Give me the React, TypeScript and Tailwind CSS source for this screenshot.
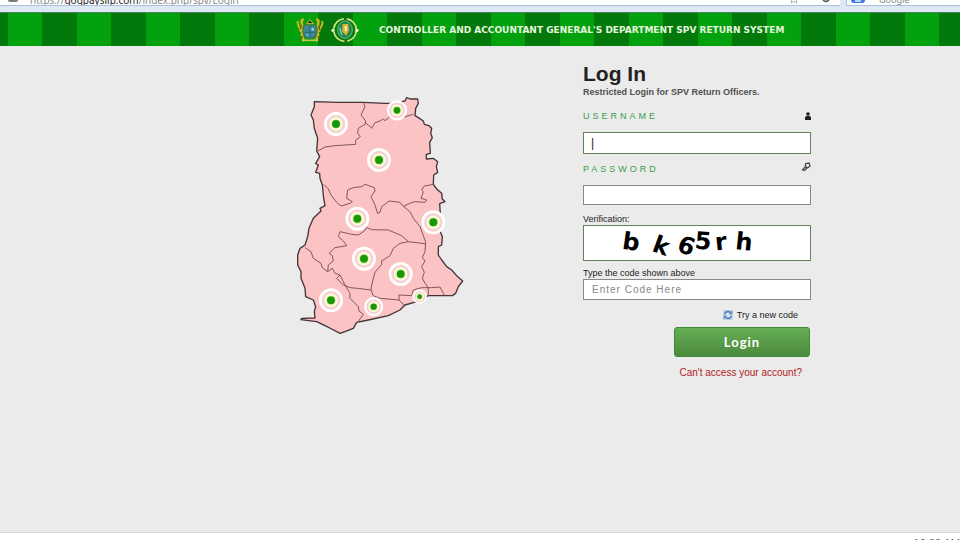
import React from "react";

const OUTLINE =
  "M88 50L160 52L235 52L300 55L325 55L360 48L365 38L375 42L398 42L400 55L392 70L390 92L400 98L415 108L418 118L432 122L440 130L437 145L442 158L434 172L436 205L424 208L424 222L445 220L458 230L454 245L458 262L446 270L445 298L455 312L470 325L472 342L480 350L464 356L466 385L466 440L472 455L470 480L460 485L460 510L470 525L485 545L500 555L515 572L533 588L520 605L512 625L502 632L430 632L395 650L360 660L345 675L310 692L250 705L215 712L205 730L180 740L165 745L140 732L120 722L95 710L48 704L50 700L90 699L88 680L92 665L85 645L62 635L60 610L48 580L48 560L38 540L38 510L45 490L60 480L68 455L72 430L85 400L108 378L105 370L120 362L116 340L112 300L105 280L104 265L92 262L100 240L92 235L104 215L95 198L98 160L88 130L85 105L78 90L88 65Z";

const BORDERS = [
  "M235 52L240 65L228 90L242 108L240 118L220 130L218 145L226 155L212 165L212 178L150 182L120 186L95 200",
  "M242 115L250 120L260 130L270 113L285 108L295 102L300 107L318 92L350 98L385 88",
  "M116 298L130 312L138 330L155 352L168 363L195 355L202 350L185 340L188 315L205 308L230 305L240 298L268 308L270 318L258 335L270 360L278 385L285 382L290 365L312 348L345 352L355 364L375 355L388 350L420 352L425 345L408 340L415 320L410 315L418 303L445 298",
  "M355 364L375 380L385 400L405 425L415 452L422 472L420 500L412 518L420 528L410 545L418 562L412 580L420 595L430 608L430 632",
  "M60 488L78 500L85 520L108 535L112 548L128 560L142 550L150 565L165 570L155 580L175 600L195 608L218 610L258 615L265 632L285 640L342 645L342 630L380 632L385 615L410 608L440 608L465 606L475 625L480 632",
  "M128 560L130 540L145 528L142 512L132 505L150 488L185 482L175 468L160 455L165 440L200 448L220 450L238 438L245 428L260 434L310 435L350 452L370 470L420 476",
  "M370 470L345 475L325 490L315 512L290 528L290 538L270 562L260 600L258 615",
  "M165 570L180 600L195 625L195 640L220 665L222 678L235 688L218 712",
  "M342 645L355 658L355 665",
];

const REGIONS = [
  { x: 153, y: 117, s: 1 },
  { x: 336, y: 76, s: 0.85 },
  { x: 282, y: 225, s: 1 },
  { x: 217, y: 401, s: 1 },
  { x: 445, y: 412, s: 1 },
  { x: 237, y: 521, s: 1 },
  { x: 347, y: 567, s: 1 },
  { x: 138, y: 646, s: 1 },
  { x: 266, y: 665, s: 0.8 },
  { x: 404, y: 635, s: 0.6 },
];

function RegionMap() {
  return (
    <svg viewBox="0 0 570 765" className="mt-[39px] h-[255px] w-[190px] shrink-0" role="img" aria-label="Map of Ghana">
      <path d={OUTLINE} fill="#fbc3c3" stroke="#453539" strokeWidth="4" strokeLinejoin="round" />
      <g fill="none" stroke="#80595d" strokeWidth="3" strokeLinejoin="round">
        {BORDERS.map((d) => (
          <path key={d} d={d} />
        ))}
      </g>
      {REGIONS.map((r) => (
        <g key={`${r.x}-${r.y}`} transform={`translate(${r.x} ${r.y}) scale(${r.s})`}>
          <circle r="32" fill="#fbd3d3" stroke="#fff" strokeWidth="8" />
          <circle r="22" fill="#fffdf0" stroke="#f3ccce" strokeWidth="3" />
          <circle r="17" fill="#e8f8b4" />
          <circle r="12" fill="#1b960c" />
        </g>
      ))}
    </svg>
  );
}

function CoatOfArms() {
  return (
    <svg viewBox="0 0 84 78" className="h-[26px] w-[28px]" aria-hidden="true">
      <g fill="none" stroke="#c9b822" strokeWidth="8" strokeLinecap="round">
        <path d="M20 8C10 14 24 22 16 30C10 38 22 40 18 52C16 62 24 64 22 70" />
        <path d="M64 8C74 14 60 22 68 30C74 38 62 40 66 52C68 62 60 64 62 70" />
        <path d="M5 14C2 24 12 30 14 42M79 14C82 24 72 30 70 42" strokeWidth="6" />
      </g>
      <path d="M20 70H66" stroke="#d0c54c" strokeWidth="5" />
      <path d="M24 26L34 22L42 28L52 22L60 28L64 46L56 60L42 66L28 60L20 46Z" fill="#3c8798" stroke="#4f6a3c" strokeWidth="3" />
      <path d="M42 28V64M25 46H60" stroke="#2c6c70" strokeWidth="3" />
      <path d="M32 20L42 8L52 20Z" fill="#242e1a" stroke="#d4bd34" strokeWidth="3" />
      <circle cx="50" cy="37" r="4" fill="#8ee0ed" />
      <circle cx="34" cy="54" r="4" fill="#4fb8d2" />
      <path d="M17 24L12 36M68 26L72 40M20 58L14 64M66 58L70 64" stroke="#6a4d10" strokeWidth="4" />
    </svg>
  );
}

function DepartmentSeal() {
  return (
    <svg viewBox="0 0 84 78" className="h-[26px] w-[28px]" aria-hidden="true">
      <circle cx="42" cy="39" r="34" fill="#087d10" stroke="#d5df83" strokeWidth="5" strokeDasharray="46 9" />
      <ellipse cx="42" cy="38" rx="22" ry="26" fill="#168b52" stroke="#79b478" strokeWidth="3" />
      <path d="M34 22L52 20L54 40L46 56L34 44Z" fill="#e1ae35" />
      <path d="M40 28L48 26V40L42 44Z" fill="#f8eba0" />
      <path d="M26 32C32 40 26 46 34 54" fill="none" stroke="#8fd4ba" strokeWidth="4" />
      <circle cx="6" cy="40" r="5" fill="#eff2c0" />
      <circle cx="78" cy="40" r="5" fill="#eff2c0" />
    </svg>
  );
}

function BrowserBar() {
  return (
    <div className="flex h-[13px] items-start gap-[6px] border-b border-[#4a8060] bg-[#dfe9f5] font-['Noto_Sans',sans-serif] text-[10px] leading-[10px] text-[#8a8a8a]">
      <div className="flex h-[6px] flex-1 items-end gap-3 overflow-hidden border-b border-[#a9bfde] bg-white pl-2">
        <span className="mb-[3px] h-[2px] w-[10px] rounded-b-sm bg-[#777b85]" />
        <span className="flex-1 whitespace-nowrap">
          https://<span className="text-[#222]">gogpayslip.com</span>/index.php/spv/Login
        </span>
        <svg viewBox="0 0 12 12" className="h-3 w-3 shrink-0 pb-[1px]" fill="none" stroke="#a4a9b2" aria-hidden="true">
          <path d="M6 1L7.5 4.5L11 5L8.500 7.500L9 11L6 9L3 11L3.500 7.500L1 5L4.500 4.500Z" />
        </svg>
        <svg viewBox="0 0 12 12" className="mr-2 ml-2 h-3 w-3 shrink-0 pb-[2px]" fill="none" stroke="#555b66" strokeWidth="2" aria-hidden="true">
          <path d="M10 6A4 4 0 1 1 6 2" />
        </svg>
      </div>
      <div className="flex h-[6px] w-[114px] items-end gap-[14px] overflow-hidden border-b border-l border-[#a9bfde] bg-white pl-1">
        <span className="mb-[2px] h-[3px] w-[14px] shrink-0 rounded-b-sm border-x-4 border-b border-[#3c7bdc] bg-[#b9d4fb]" />
        <span className="text-[9px]">Google</span>
      </div>
    </div>
  );
}

function UserIcon() {
  return (
    <svg viewBox="0 0 18 24" className="h-2 w-[6px]" fill="#202020" aria-hidden="true">
      <circle cx="9" cy="6" r="5.500" />
      <path d="M0 24V17Q0 12 5 12H13Q18 12 18 17V24Z" />
    </svg>
  );
}

function KeyIcon() {
  return (
    <svg viewBox="0 0 30 30" className="mb-1 h-[10px] w-[10px]" fill="none" stroke="#4c4c4c" strokeWidth="4" aria-hidden="true">
      <path d="M14 5L24 3L27 12L20 18L13 13Z" />
      <path d="M14 14L3 25M4 22L11 25L18 17" />
    </svg>
  );
}

function RefreshIcon() {
  return (
    <svg viewBox="0 0 30 30" className="h-[10px] w-[10px]" fill="none" stroke="#5685bd" strokeWidth="5" aria-hidden="true">
      <rect x="3" y="1" width="24" height="28" fill="#dce8f3" stroke="#a9c1dd" strokeWidth="2" />
      <path d="M5 13Q6 5 15 5Q22 5 25 11M25 17Q24 25 15 25Q8 25 5 19" />
      <path d="M18 12H27V3M12 18H3V27" strokeWidth="3" />
    </svg>
  );
}

const CAPTCHA = [
  { c: "b", x: 47, y: 24, a: 8 },
  { c: "k", x: 77, y: 28, a: 20 },
  { c: "6", x: 102, y: 28, a: 20 },
  { c: "5", x: 119, y: 23, a: 4 },
  { c: "r", x: 137, y: 24, a: -6 },
  { c: "h", x: 160, y: 24, a: 6 },
];

function Captcha() {
  return (
    <div className="h-9 border border-[#66805a] bg-white">
      <svg viewBox="0 0 226 34" className="h-full w-full font-['DejaVu_Sans',sans-serif] text-[24px] font-bold" role="img" aria-label="Verification code">
        {CAPTCHA.map((g) => (
          <text key={g.c} x={g.x} y={g.y} textAnchor="middle" transform={`rotate(${g.a} ${g.x} ${g.y - 7})`} fill="#000">
            {g.c}
          </text>
        ))}
      </svg>
    </div>
  );
}

export default function App() {
  return (
    <div className="flex min-h-screen flex-col bg-[#ebebeb] font-['Liberation_Sans',Arial,sans-serif] text-[#222]">
      <BrowserBar />
      <header className="flex h-[33px] items-center bg-[repeating-linear-gradient(90deg,#04790b_0_8px,#02a10d_8px_42px,#04790b_42px_69px)] pl-[296px]">
        <CoatOfArms />
        <span className="w-[7px]" />
        <DepartmentSeal />
        <p className="pl-5 font-['DejaVu_Sans',sans-serif] text-[9px] leading-3 font-bold whitespace-nowrap text-[#e6f7df]">
          CONTROLLER AND ACCOUNTANT GENERAL&apos;S DEPARTMENT SPV RETURN SYSTEM
        </p>
      </header>
      <main className="flex flex-1 items-start gap-[108px] pl-[285px]">
        <RegionMap />
        <form className="flex w-[228px] flex-col pt-4 text-[9px] leading-3" onSubmit={(e) => e.preventDefault()}>
          <h1 className="text-[21px] leading-6 font-bold">Log In</h1>
          <p className="font-bold whitespace-nowrap text-[#505050]">Restricted Login for SPV Return Officers.</p>

          <div className="mt-3 flex h-3 items-center justify-between">
            <label htmlFor="username" className="tracking-[3px] text-[#37a04a]">USERNAME</label>
            <UserIcon />
          </div>
          <input
            id="username"
            defaultValue="|"
            className="mt-[10px] h-[22px] w-full border border-[#66805a] bg-white px-[7px] text-xs leading-4 outline-none"
          />

          <div className="mt-[9px] flex h-3 items-center justify-between">
            <label htmlFor="password" className="tracking-[3px] text-[#37a04a]">PASSWORD</label>
            <KeyIcon />
          </div>
          <input id="password" type="password" className="mt-[10px] h-5 w-full border border-[#888] bg-white px-2 outline-none" />

          <p className="mt-2">Verification:</p>
          <Captcha />

          <label htmlFor="code" className="mt-[6px]">Type the code shown above</label>
          <input
            id="code"
            placeholder="Enter Code Here"
            className="h-[21px] w-full border border-[#888] bg-white px-2 text-[10px] tracking-[1px] outline-none placeholder:text-[#888]"
          />

          <a href="#code" className="mt-[9px] mr-[13px] flex items-center gap-1 self-end">
            <RefreshIcon />
            Try a new code
          </a>
          <button
            type="submit"
            className="mt-[6px] mr-px h-[30px] w-[136px] self-end rounded-[3px] border border-[#3f8a38] bg-linear-to-b from-[#65ae55] to-[#4b8a3d] font-['Lato',sans-serif] text-[13px] font-bold tracking-[1px] text-white"
          >
            Login
          </button>
          <a href="#username" className="mt-[10px] mr-[9px] self-end text-[10px] text-[#b01c22]">Can&apos;t access your account?</a>
        </form>
      </main>
      <footer className="flex h-2 items-start justify-end overflow-hidden border-t border-[#d8d8d8] bg-white">
        <time className="pt-1 text-[11px] leading-3 text-[#666]">10:20 AM</time>
      </footer>
    </div>
  );
}
